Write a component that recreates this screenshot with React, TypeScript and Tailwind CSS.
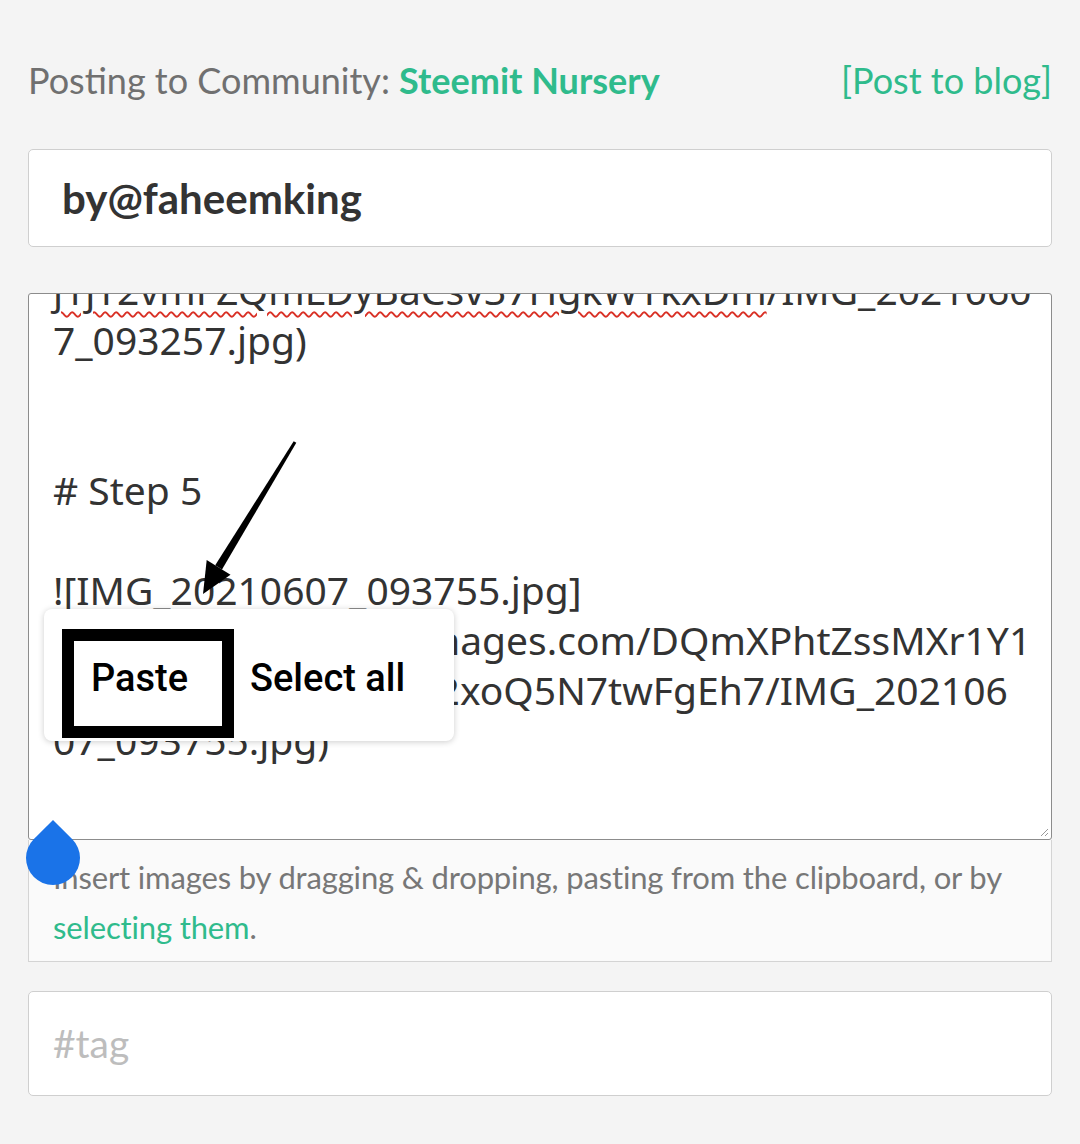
import React from "react";

const lines = [
  "j1jT2vmFZQmLDyBaCsv37HgkWTkxDm/IMG_2021060",
  "7_093257.jpg)",
  "",
  "",
  "# Step 5",
  "",
  "![IMG_20210607_093755.jpg]",
  "(https://cdn.steemitimages.com/DQmXPhtZssMXr1Y1",
  "nN3ZpJs8kdPaiU7Wq2xoQ5N7twFgEh7/IMG_202106",
  "07_093755.jpg)",
  "",
];

const SelectionHandle = () => (
  <svg width="56" height="66" viewBox="0 0 54 66" className="absolute left-[25px] top-[820px]">
    <path d="M27 0 L46.1 18.9 A27 27 0 1 1 7.9 18.9 Z" fill="#1a73e8" />
  </svg>
);

const Arrow = () => (
  <svg width="1080" height="1144" className="absolute left-0 top-0 pointer-events-none">
    <polygon points="296.3,442.8 293.7,441.2 215.2,565.3 222,569.5" fill="#000" />
    <polygon points="203,594 206.7,560.1 230.5,574.7" fill="#000" />
  </svg>
);

export default function App() {
  return (
    <div className="relative w-[1080px] h-[1144px] overflow-hidden bg-[#f4f4f4] px-[28px] font-['Lato',sans-serif]">
      <div className="flex justify-between items-center pt-[60px] h-[100px] text-[36px] leading-[40px]">
        <div className="text-[#707070]">
          Posting to Community: <span className="font-bold text-[#2fbb8c]">Steemit Nursery</span>
        </div>
        <div className="text-[#2fbb8c]">[Post to blog]</div>
      </div>

      <div className="mt-[49px] h-[98px] bg-white border border-[#cfcfcf] rounded-[5px] flex items-center px-[33px] text-[42px] font-bold text-[#333]">
        by@faheemking
      </div>

      <div className="relative mt-[46px] h-[547px] bg-white border border-[#8c8c8c] rounded-[3px] overflow-hidden font-['Noto_Sans',sans-serif] text-[39px] leading-[50px] text-[#333]">
        <div className="mt-[-29px] px-[24px]">
          {lines.map((l, i) => (
            <div key={i} className="h-[50px] whitespace-nowrap">
              {i === 0 ? (
                <>
                  <span className="underline decoration-wavy decoration-[#d93025] decoration-[2px] underline-offset-[6px]">
                    j1jT2vmFZQmLDyBaCsv37HgkWTkxDm
                  </span>
                  /IMG_2021060
                </>
              ) : (
                l
              )}
            </div>
          ))}
        </div>
        <svg width="10" height="10" className="absolute right-[2px] bottom-[2px]">
          <line x1="2" y1="9" x2="9" y2="2" stroke="#999" strokeWidth="1" />
          <line x1="6" y1="9" x2="9" y2="6" stroke="#999" strokeWidth="1" />
        </svg>
      </div>

      <div className="h-[122px] bg-[#fafafa] border-x border-b border-[#d4d4d4] px-[24px] pt-[12px] text-[31px] leading-[50px] text-[#777] tracking-[-0.15px]">
        Insert images by dragging &amp; dropping, pasting from the clipboard, or by{" "}
        <span className="text-[#2fbb8c]">selecting them</span>.
      </div>

      <div className="mt-[29px] h-[105px] bg-white border border-[#cfcfcf] rounded-[5px] flex items-center px-[24px] text-[39px] text-[#bdbdbd]">
        #tag
      </div>

      <div className="absolute left-[44px] top-[609px] w-[410px] h-[132px] bg-white rounded-[8px] shadow-[0_1px_6px_rgba(0,0,0,0.2)] flex items-start pt-[20px] pl-[18px] font-['Roboto',sans-serif] text-[38px] font-medium text-black">
        <div className="w-[172px] h-[109px] border-[12px] border-black flex items-center pl-[17px] pb-[10px]">
          Paste
        </div>
        <div className="ml-[16px] h-[109px] flex items-center pb-[10px]">Select all</div>
      </div>

      <Arrow />
      <SelectionHandle />
    </div>
  );
}
